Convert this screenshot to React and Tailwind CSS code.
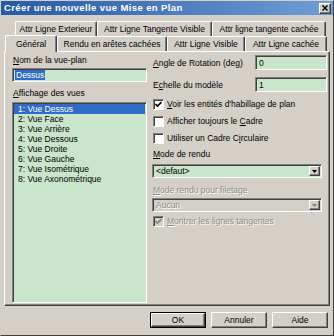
import React from "react";

const raised =
  "border border-l-white border-t-white border-r-[#404040] border-b-[#404040] shadow-[inset_-1px_-1px_0_#808080]";
const sunken =
  "border border-l-[#808080] border-t-[#808080] border-r-white border-b-white shadow-[inset_1px_1px_0_#404040]";
const green = "bg-[#c9e5cb]";
const disabledText = "text-[#8c8a84] [text-shadow:1px_1px_0_#ffffff]";

function Tab({ w, label, selected }) {
  return (
    <div
      className={`${selected ? "h-[17px] relative top-[1px] z-10 bg-[#d4d0c8]" : "h-[15px]"} flex items-center justify-center rounded-t-[2px] border-l border-t border-l-white border-t-white border-r border-r-[#404040] shadow-[inset_-1px_0_0_#808080] shrink-0`}
      style={{ width: w }}
    >
      <span className="whitespace-nowrap">{label}</span>
    </div>
  );
}

function Check({ checked, disabled }) {
  return (
    <div
      className={`w-[11px] h-[11px] shrink-0 ${sunken} ${disabled ? "bg-[#d4d0c8]" : "bg-white"} flex items-center justify-center`}
    >
      {checked && (
        <svg width="7" height="7" viewBox="0 0 7 7">
          <path
            d="M0.5 3 L2.5 5 L6.5 1"
            fill="none"
            stroke={disabled ? "#808080" : "#000"}
            strokeWidth="1.6"
          />
        </svg>
      )}
    </div>
  );
}

function Select({ value, disabled }) {
  return (
    <div
      className={`w-[170px] h-[14px] flex items-center ${sunken} ${disabled ? "bg-[#d4d0c8]" : green}`}
    >
      <span className={`flex-1 pl-[3px] ${disabled ? disabledText : ""}`}>{value}</span>
      <div className={`w-[11px] h-[10px] mr-[1px] flex items-center justify-center bg-[#d4d0c8] ${raised}`}>
        <svg width="5" height="3" viewBox="0 0 5 3">
          <path d="M0 0 H5 L2.5 3 Z" fill={disabled ? "#808080" : "#000"} />
        </svg>
      </div>
    </div>
  );
}

function Button({ label, w, isDefault }) {
  return (
    <div
      className={`h-[16px] flex items-center justify-center ${isDefault ? "border border-black" : ""}`}
      style={{ width: w }}
    >
      <div className={`w-full h-full flex items-center justify-center ${raised}`}>{label}</div>
    </div>
  );
}

const views = [
  "1: Vue Dessus",
  "2: Vue Face",
  "3: Vue Arrière",
  "4: Vue Dessous",
  "5: Vue Droite",
  "6: Vue Gauche",
  "7: Vue Isométrique",
  "8: Vue Axonométrique",
];

export default function App() {
  return (
    <div className="w-[334px] h-[336px] bg-[#d4d0c8] border border-l-[#d4d0c8] border-t-[#d4d0c8] border-r-[#404040] border-b-[#404040] font-['Liberation_Sans',Arial,sans-serif] text-[8.5px] leading-[10px] text-black overflow-hidden">
      {/* Title bar */}
      <div className="h-[14px] flex items-center bg-gradient-to-r from-[#275aa5] to-[#6f9dd5]">
        <span className="pl-[3px] flex-1 text-white font-bold text-[9.5px] tracking-[0.4px] whitespace-nowrap">
          Créer une nouvelle vue Mise en Plan
        </span>
        <div className={`w-[12px] h-[11px] mr-[2px] bg-[#d4d0c8] flex items-center justify-center ${raised}`}>
          <svg width="6" height="6" viewBox="0 0 6 6">
            <path d="M0.5 0.5 L5.5 5.5 M5.5 0.5 L0.5 5.5" stroke="#000" strokeWidth="1.5" />
          </svg>
        </div>
      </div>

      {/* Tabs */}
      <div className="mt-[6px]">
        <div className="flex pl-[14px] h-[15px]">
          <Tab w={82} label="Attr Ligne Exterieur" />
          <Tab w={115} label="Attr Ligne Tangente Visible" />
          <Tab w={114} label="Attr ligne tangente cachée" />
        </div>
        <div className="flex items-end pl-[4px] h-[15px]">
          <Tab w={52} label="Général" selected />
          <Tab w={110} label="Rendu en arêtes cachées" />
          <Tab w={78} label="Attr Ligne Visible" />
          <Tab w={82} label="Attr Ligne cachée" />
        </div>
      </div>

      {/* Panel */}
      <div className="ml-[3px] w-[326px] h-[255px] border border-l-white border-t-white border-r-[#404040] border-b-[#404040] shadow-[inset_-1px_-1px_0_#808080] flex pl-[7px] pt-[3px] gap-[5px]">
        {/* Left column */}
        <div className="w-[135px] flex flex-col">
          <div className="h-[10px] pl-[1px]">
            <span className="underline">N</span>om de la vue-plan
          </div>
          <div className={`mt-[3px] h-[14px] flex items-center pl-[2px] ${green} ${sunken}`}>
            <span className="bg-[#2f6cc6] text-white px-[1px]">Dessus</span>
          </div>
          <div className="mt-[6px] h-[10px] pl-[1px]">
            <span className="underline">A</span>ffichage des vues
          </div>
          <div className={`mt-[4px] h-[201px] ${green} ${sunken} pt-[1px] px-[1px]`}>
            {views.map((v, i) => (
              <div
                key={v}
                className={`h-[10px] pl-[4px] whitespace-nowrap ${i === 0 ? "bg-[#2f6cc6] text-white" : ""}`}
              >
                {v}
              </div>
            ))}
          </div>
        </div>

        {/* Right column */}
        <div className="w-[175px] flex flex-col">
          <div className="h-[15px] flex items-center justify-between">
            <span className="pl-[1px]">
              <span className="underline">A</span>ngle de Rotation (deg)
            </span>
            <div className={`w-[72px] h-[15px] ${green} ${sunken} pl-[3px] flex items-center`}>0</div>
          </div>
          <div className="mt-[7px] h-[15px] flex items-center justify-between">
            <span className="pl-[1px]">
              E<span className="underline">c</span>helle du modèle
            </span>
            <div className={`w-[72px] h-[15px] ${green} ${sunken} pl-[3px] flex items-center`}>1</div>
          </div>
          <div className="mt-[6px] h-[12px] flex items-center gap-[3px] pl-[1px]">
            <Check checked />
            <span>
              <span className="underline">V</span>oir les entités d'habillage de plan
            </span>
          </div>
          <div className="mt-[5px] h-[12px] flex items-center gap-[3px] pl-[1px]">
            <Check />
            <span>
              Afficher toujours le <span className="underline">C</span>adre
            </span>
          </div>
          <div className="mt-[5px] h-[12px] flex items-center gap-[3px] pl-[1px]">
            <Check />
            <span>
              Utiliser un Cadre C<span className="underline">i</span>rculaire
            </span>
          </div>
          <div className="mt-[5px] h-[10px] pl-[1px]">
            <span className="underline">M</span>ode de rendu
          </div>
          <div className="mt-[5px]">
            <Select value="<defaut>" />
          </div>
          <div className={`mt-[7px] h-[10px] pl-[1px] ${disabledText}`}>
            <span className="underline">M</span>ode rendu pour filetage
          </div>
          <div className="mt-[3px]">
            <Select value="Aucun" disabled />
          </div>
          <div className="mt-[3px] h-[12px] flex items-center gap-[3px] pl-[1px]">
            <Check checked disabled />
            <span className={disabledText}>
              <span className="underline">M</span>ontrer les lignes tangentes
            </span>
          </div>
        </div>
      </div>

      {/* Buttons */}
      <div className="mt-[6px] flex pl-[149px] gap-[5px]">
        <Button label="OK" w={56} isDefault />
        <Button label="Annuler" w={56} />
        <Button label="Aide" w={56} />
      </div>
    </div>
  );
}
